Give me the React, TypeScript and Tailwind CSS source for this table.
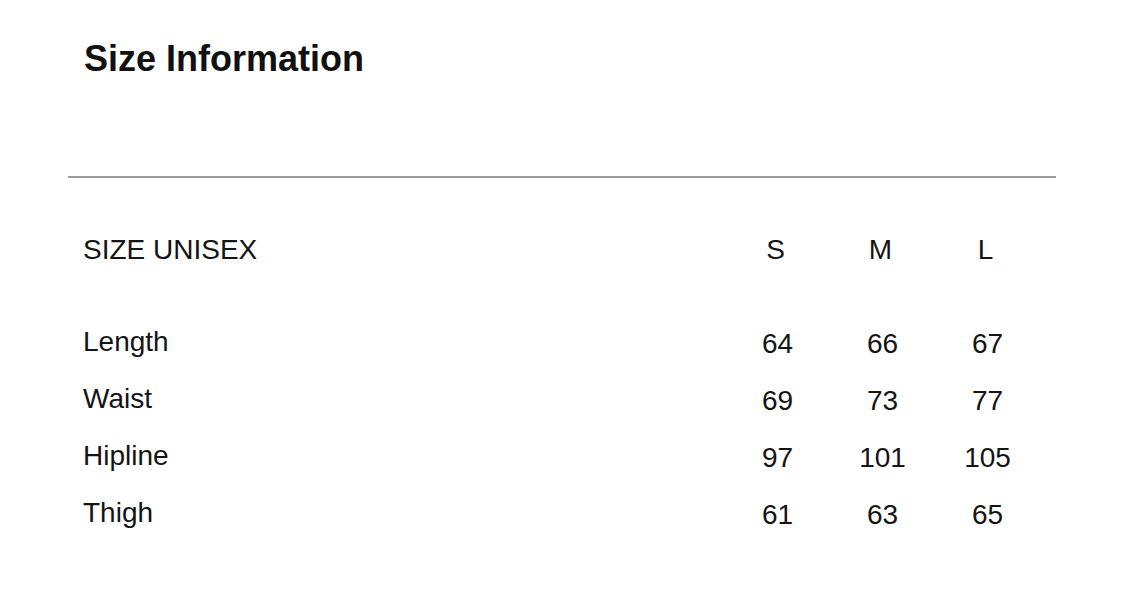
const sizes = ["S", "M", "L"];

const rows: { label: string; values: number[] }[] = [
  { label: "Length", values: [64, 66, 67] },
  { label: "Waist", values: [69, 73, 77] },
  { label: "Hipline", values: [97, 101, 105] },
  { label: "Thigh", values: [61, 63, 65] },
];

export default function App() {
  return (
    <div className="w-full h-[613px] bg-white text-[#141414] font-['Liberation_Sans',Arial,sans-serif] overflow-hidden">
      <h1 className="pl-[84px] pt-[41px] text-[36px] leading-[36px] font-bold text-[#111]">Size Information</h1>

      <div className="ml-[68px] mt-[99px] w-[988px] h-[2px] bg-[#9a9a9a]" />

      {/* header */}
      <div className="mt-[43px] pl-[83px] grid grid-cols-[640px_105px_105px_105px] text-[28px] leading-[57px]">
        <div>SIZE UNISEX</div>
        {sizes.map(s => (
          <div key={s} className="text-center">{s}</div>
        ))}
      </div>

      {/* rows */}
      <div className="mt-[35px] pl-[83px]">
        {rows.map(r => (
          <div key={r.label} className="grid grid-cols-[640px_105px_105px_105px] text-[28px] leading-[57px]">
            <div>{r.label}</div>
            {r.values.map((v, i) => (
              <div key={i} className="text-center translate-x-[2px] translate-y-[2px]">{v}</div>
            ))}
          </div>
        ))}
      </div>
    </div>
  );
}
